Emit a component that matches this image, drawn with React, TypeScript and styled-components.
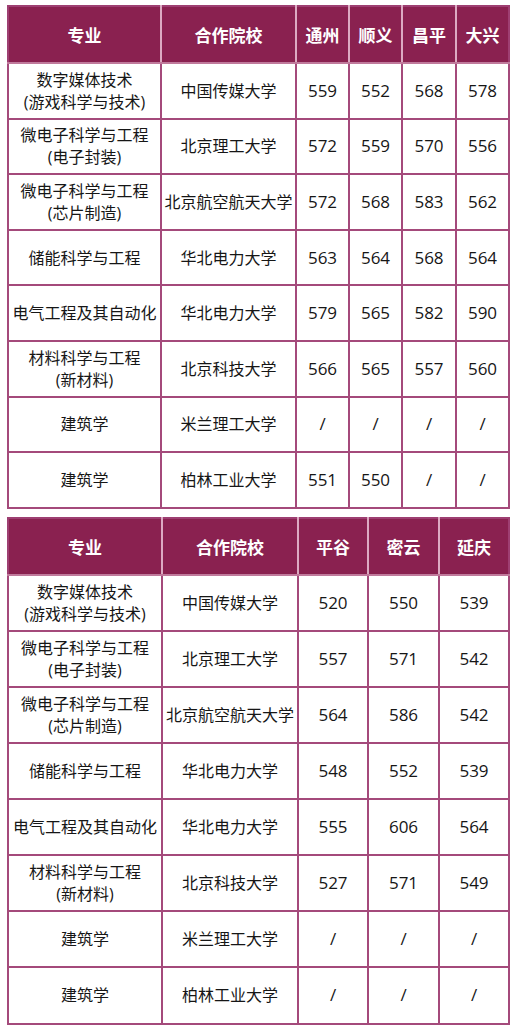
import * as React from 'react'
import styled, { createGlobalStyle } from 'styled-components'

const GlobalStyle = createGlobalStyle`
  body {
    margin: 0;
    background: #ffffff;
    font-family: "Open Sans", "Noto Sans CJK SC", sans-serif;
  }
`

const StyledPage = styled.div`
  display: flex;
  flex-direction: column;
  gap: 8px;
  padding: 5px 0 0 7px;
  width: 501px;
`

const StyledTable = styled.table`
  width: 501px;
  border-collapse: collapse;
  table-layout: fixed;
  border: 2px solid #9e3f72;
`

const StyledHeadCell = styled.th`
  height: 55px;
  padding: 0;
  background-color: #8a2150;
  color: #ffffff;
  font-size: 17px;
  font-weight: 700;
  text-align: center;
  border-left: 2px solid #dcaac2;
  border-bottom: 2px solid #c07a9c;

  &:first-child {
    border-left: none;
  }
`

const StyledRow = styled.tr<{ $h: number }>`
  height: ${({ $h }) => $h}px;
`

const StyledCell = styled.td<{ $num?: boolean }>`
  padding: 0;
  color: #161616;
  font-size: ${({ $num }) => ($num ? '17px' : '16px')};
  line-height: 22px;
  text-align: center;
  white-space: nowrap;
  border: 2px solid #a44a7b;
`

const majors: [string, string][] = [
  ['数字媒体技术', '(游戏科学与技术)'],
  ['微电子科学与工程', '(电子封装)'],
  ['微电子科学与工程', '(芯片制造)'],
  ['储能科学与工程', ''],
  ['电气工程及其自动化', ''],
  ['材料科学与工程', '(新材料)'],
  ['建筑学', ''],
  ['建筑学', ''],
]

const schools = [
  '中国传媒大学',
  '北京理工大学',
  '北京航空航天大学',
  '华北电力大学',
  '华北电力大学',
  '北京科技大学',
  '米兰理工大学',
  '柏林工业大学',
]

const scoresA = [
  ['559', '552', '568', '578'],
  ['572', '559', '570', '556'],
  ['572', '568', '583', '562'],
  ['563', '564', '568', '564'],
  ['579', '565', '582', '590'],
  ['566', '565', '557', '560'],
  ['/', '/', '/', '/'],
  ['551', '550', '/', '/'],
]

const scoresB = [
  ['520', '550', '539'],
  ['557', '571', '542'],
  ['564', '586', '542'],
  ['548', '552', '539'],
  ['555', '606', '564'],
  ['527', '571', '549'],
  ['/', '/', '/'],
  ['/', '/', '/'],
]

type TableProps = {
  districts: string[]
  widths: number[]
  scores: string[][]
  rowHeight: number
}

const ScoreTable = ({ districts, widths, scores, rowHeight }: TableProps) => {
  return (
    <StyledTable>
      <colgroup>
        {widths.map((w, i) => (
          <col key={i} style={{ width: w }} />
        ))}
      </colgroup>
      <thead>
        <tr>
          <StyledHeadCell>专业</StyledHeadCell>
          <StyledHeadCell>合作院校</StyledHeadCell>
          {districts.map((d) => (
            <StyledHeadCell key={d}>{d}</StyledHeadCell>
          ))}
        </tr>
      </thead>
      <tbody>
        {majors.map((m, i) => (
          <StyledRow key={i} $h={rowHeight}>
            <StyledCell>
              {m[0]}
              {m[1] && <br />}
              {m[1]}
            </StyledCell>
            <StyledCell>{schools[i]}</StyledCell>
            {scores[i].map((s, j) => (
              <StyledCell key={j} $num>
                {s}
              </StyledCell>
            ))}
          </StyledRow>
        ))}
      </tbody>
    </StyledTable>
  )
}

const App = () => {
  return (
    <>
      <GlobalStyle />
      <StyledPage>
        <ScoreTable
          districts={['通州', '顺义', '昌平', '大兴']}
          widths={[153, 135, 53, 53, 54, 53]}
          scores={scoresA}
          rowHeight={55.6}
        />
        <ScoreTable
          districts={['平谷', '密云', '延庆']}
          widths={[154, 136, 70, 71, 70]}
          scores={scoresB}
          rowHeight={56.1}
        />
      </StyledPage>
    </>
  )
}

export default App
